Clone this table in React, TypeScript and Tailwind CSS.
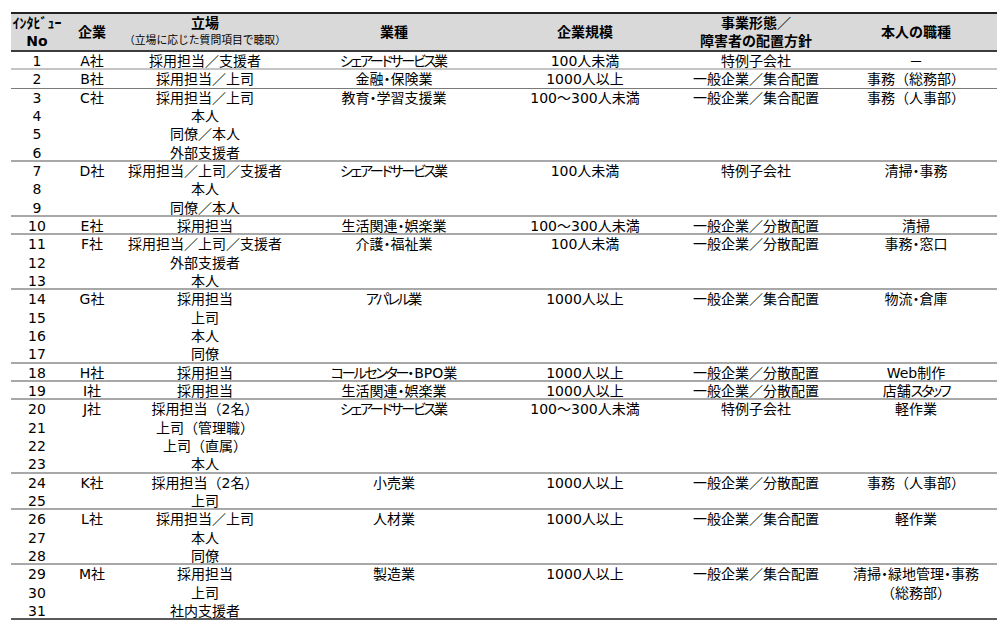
const LINE = 18.33;

type Group = {
  nos: number[];
  company: string;
  roles: string[];
  industry: string;
  size: string;
  style: string;
  job: string[];
  sep: "light" | "dark" | "mid" | "end";
};

const groups: Group[] = [
  { nos: [1], company: "A社", roles: ["採用担当／支援者"], industry: "シェアードサービス業", size: "100人未満", style: "特例子会社", job: ["－"], sep: "light" },
  { nos: [2], company: "B社", roles: ["採用担当／上司"], industry: "金融・保険業", size: "1000人以上", style: "一般企業／集合配置", job: ["事務（総務部）"], sep: "dark" },
  { nos: [3, 4, 5, 6], company: "C社", roles: ["採用担当／上司", "本人", "同僚／本人", "外部支援者"], industry: "教育・学習支援業", size: "100～300人未満", style: "一般企業／集合配置", job: ["事務（人事部）"], sep: "mid" },
  { nos: [7, 8, 9], company: "D社", roles: ["採用担当／上司／支援者", "本人", "同僚／本人"], industry: "シェアードサービス業", size: "100人未満", style: "特例子会社", job: ["清掃・事務"], sep: "mid" },
  { nos: [10], company: "E社", roles: ["採用担当"], industry: "生活関連・娯楽業", size: "100～300人未満", style: "一般企業／分散配置", job: ["清掃"], sep: "mid" },
  { nos: [11, 12, 13], company: "F社", roles: ["採用担当／上司／支援者", "外部支援者", "本人"], industry: "介護・福祉業", size: "100人未満", style: "一般企業／分散配置", job: ["事務・窓口"], sep: "mid" },
  { nos: [14, 15, 16, 17], company: "G社", roles: ["採用担当", "上司", "本人", "同僚"], industry: "アパレル業", size: "1000人以上", style: "一般企業／集合配置", job: ["物流・倉庫"], sep: "mid" },
  { nos: [18], company: "H社", roles: ["採用担当"], industry: "コールセンター・BPO業", size: "1000人以上", style: "一般企業／分散配置", job: ["Web制作"], sep: "mid" },
  { nos: [19], company: "I社", roles: ["採用担当"], industry: "生活関連・娯楽業", size: "1000人以上", style: "一般企業／分散配置", job: ["店舗スタッフ"], sep: "mid" },
  { nos: [20, 21, 22, 23], company: "J社", roles: ["採用担当（2名）", "上司（管理職）", "上司（直属）", "本人"], industry: "シェアードサービス業", size: "100～300人未満", style: "特例子会社", job: ["軽作業"], sep: "mid" },
  { nos: [24, 25], company: "K社", roles: ["採用担当（2名）", "上司"], industry: "小売業", size: "1000人以上", style: "一般企業／分散配置", job: ["事務（人事部）"], sep: "mid" },
  { nos: [26, 27, 28], company: "L社", roles: ["採用担当／上司", "本人", "同僚"], industry: "人材業", size: "1000人以上", style: "一般企業／集合配置", job: ["軽作業"], sep: "mid" },
  { nos: [29, 30, 31], company: "M社", roles: ["採用担当", "上司", "社内支援者"], industry: "製造業", size: "1000人以上", style: "一般企業／集合配置", job: ["清掃・緑地管理・事務", "（総務部）"], sep: "end" },
];

const sepClass = {
  light: "border-b-2 border-[#c4c4c4]",
  dark: "border-b border-[#7a7a7a]",
  mid: "border-b-2 border-[#a8a8a8]",
  end: "border-b-2 border-[#5a5a5a]",
};

const cols = "grid grid-cols-[52px_58px_168px_210px_172px_170px_156px]";

// the original uses a font with narrow kana; squeeze katakana runs a little
function Prop({ text }: { text: string }) {
  const parts = text.split(/([\u30A1-\u30FA\u30FC]+)/);
  return (
    <div className="[font-feature-settings:'palt']">
      {parts.map((p, i) =>
        i % 2 === 1 ? (
          <span key={i} className="tracking-[-2.2px]">
            {p}
          </span>
        ) : (
          <span key={i}>{p}</span>
        ),
      )}
    </div>
  );
}

function Line({ text }: { text: string }) {
  if (text.includes("（") || text.includes("／")) return <div>{text}</div>;
  return <Prop text={text} />;
}

export default function App() {
  return (
    <div
      className="min-h-screen bg-white pt-[12px] pl-[11px] text-[14px] leading-[18.33px] text-black"
      style={{ fontFamily: '"DejaVu Sans", "Noto Sans CJK JP", sans-serif' }}
    >
      <div className="w-[986px]">
        <div
          className={`${cols} h-[40px] border-t-2 border-b-2 border-t-[#222] border-b-[#3c3c3c] bg-[#d9d9d9] font-bold`}
        >
          <div className="flex flex-col items-center justify-center leading-[18px]">
            <span>ｲﾝﾀﾋﾞｭｰ</span>
            <span>No</span>
          </div>
          <div className="flex items-center justify-center">企業</div>
          <div className="flex flex-col items-center justify-center leading-[18px]">
            <span>立場</span>
            <span className="text-[10.8px] font-normal">（立場に応じた質問項目で聴取）</span>
          </div>
          <div className="flex items-center justify-center">業種</div>
          <div className="flex items-center justify-center">企業規模</div>
          <div className="flex flex-col items-center justify-center leading-[18px]">
            <span>事業形態／</span>
            <span>障害者の配置方針</span>
          </div>
          <div className="flex items-center justify-center pr-[6px]">本人の職種</div>
        </div>

        {groups.map((g) => (
          <div
            key={g.company}
            className={`${cols} box-border text-center ${sepClass[g.sep]}`}
            style={{ height: g.nos.length * LINE }}
          >
            <div>
              {g.nos.map((n) => (
                <div key={n}>{n}</div>
              ))}
            </div>
            <div>{g.company}</div>
            <div>
              {g.roles.map((r, i) => (
                <div key={i}>{r}</div>
              ))}
            </div>
            <Prop text={g.industry} />
            <div>{g.size}</div>
            <div>{g.style}</div>
            <div className="pr-[6px]">
              {g.job.map((j, i) => (
                <Line key={i} text={j} />
              ))}
            </div>
          </div>
        ))}
      </div>
    </div>
  );
}
